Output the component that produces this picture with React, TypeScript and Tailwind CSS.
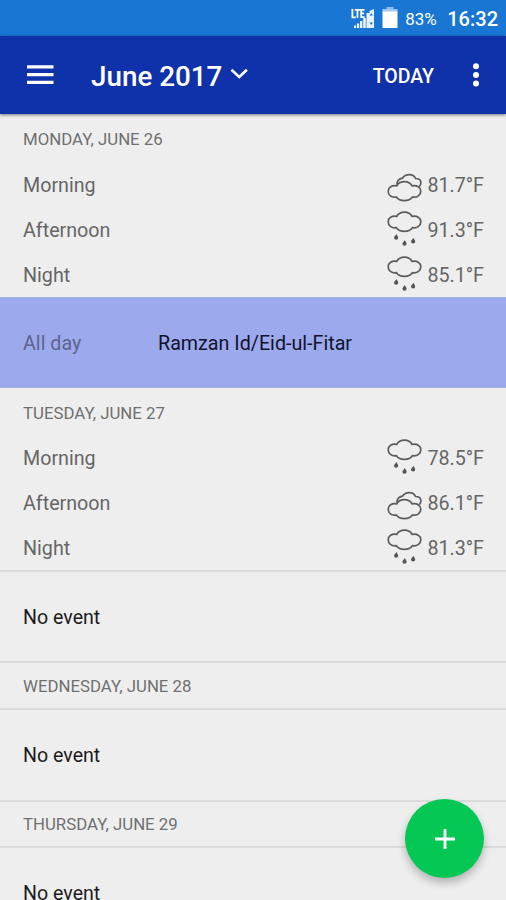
import React from 'react';

type Sky = 'cloudy' | 'rain';
type Period = { label: string; sky: Sky; temp: string };

const CLOUD =
  'M9.8 9.4C11.2 6.8 14 5.2 17.4 5.2S23.6 6.8 25 9.4C30 8.4 33.8 11 33.8 14.8S30.4 21.4 25.4 20.7C23.6 23.3 21 24.3 17.4 24.3S11.2 23.3 9.4 20.7C4.4 21.4 1.2 18.6 1.2 14.8S4.8 8.4 9.8 9.4Z';
const DROP = 'M0.4 -3C1 -1.4 2.2 -0.5 2.2 0.7A2.1 2.1 0 0 1 -2 0.7C-2 -0.5 -0.2 -1.4 0.4 -3Z';

function SkyIcon({ sky }: { sky: Sky }) {
  return (
    <svg className="h-[45px] w-[35px] shrink-0" viewBox="0 0 35 45" fill="none" stroke="#5c5c5c" strokeWidth="1.7">
      {sky === 'rain' ? (
        <>
          <path d={CLOUD} />
          <g fill="#555" stroke="none">
            <path d={DROP} transform="translate(9 30)" />
            <path d={DROP} transform="translate(17.4 36)" />
            <path d={DROP} transform="translate(26 33.8)" />
          </g>
        </>
      ) : (
        <>
          <path d={CLOUD} transform="translate(0 14.4)" />
          <path d="M9.8 22.5C10.2 18.7 12.2 16.8 15.4 16.2C17 13.8 19.3 12.6 22.3 12.6C25.5 12.6 27.5 14 28.6 16.5C32 16.5 33.9 18.2 33.9 20.8C33.9 22.3 33.4 23.6 32.2 24.7" />
        </>
      )}
    </svg>
  );
}

function DateHeader({ className, children }: { className: string; children: React.ReactNode }) {
  return (
    <div className={`flex shrink-0 items-center pl-[23px] text-[16.8px] text-[#707070] ${className}`}>
      <span>{children}</span>
    </div>
  );
}

function Forecast({ periods }: { periods: Period[] }) {
  return (
    <div className="flex shrink-0 flex-col text-[19.7px] text-[#666]">
      {periods.map((p) => (
        <div key={p.label} className="flex h-[45px] items-center pl-[23px] pr-[22px]">
          <span className="flex-1 pt-[2px]">{p.label}</span>
          <SkyIcon sky={p.sky} />
          <span className="w-[62px] pt-[2px] text-right">{p.temp}</span>
        </div>
      ))}
    </div>
  );
}

function NoEvent({ className }: { className: string }) {
  return (
    <div className={`flex shrink-0 items-center border-y-2 border-[#dbdbdb] pl-[23px] pt-[2px] text-[19.6px] text-[#1c1c1c] ${className}`}>
      <span>No event</span>
    </div>
  );
}

export default function App() {
  return (
    <div className="relative flex h-[900px] w-[506px] flex-col overflow-hidden bg-[#eee] font-[Roboto,sans-serif]">
      <div className="flex h-9 shrink-0 items-center bg-[#1976d2] pr-2 text-white">
        <svg className="ml-auto h-6 w-[25px]" viewBox="0 0 25 24">
          <g fill="none" stroke="#fff" strokeWidth="1.8">
            <path d="M1.4 3v8.4h3.4M3.8 3.8h5.4M6.5 3.8v8M13.5 3.8h-3.3v7.4h3.3M10.2 7.4h3" />
          </g>
          <path d="M3 19.5h2V22H3zM5.8 17.5h2.4V22H5.8zM9 15h2.4v7H9zM12.2 12h2.6v10h-2.6zM15.5 7h3v15h-3zM18.5 5l4.5-2v19h-4.5z" fill="#e9f3ff" />
          <path d="M20.2 7l1.7 2.5h-3.4zM20.2 19l1.7-2.5h-3.4z" fill="#1976d2" />
        </svg>
        <svg className="ml-1.5 h-6 w-4" viewBox="0 0 16 24">
          <path d="M4.5 1h7v2.4h-7z" fill="#8dbcf0" />
          <path d="M.5 3h15v3.5H.5z" fill="#9fc8f3" />
          <path d="M.5 5.5h15V22H.5z" fill="#fff" />
        </svg>
        <span className="ml-[7px] w-[42px] pt-[3px] text-[17px]">83%</span>
        <span className="pt-[2px] text-[20px] font-medium">16:32</span>
      </div>

      <header className="z-10 flex h-[78px] shrink-0 items-center bg-[#0f31aa] pl-[27px] pr-[24px] text-white shadow-[0_1px_3px_rgba(0,0,0,0.5)]">
        <svg className="h-5 w-[27px]" viewBox="0 0 27 20" fill="#fff">
          <path d="M0 .2h26.5v3.3H0zM0 8h26.5v3.3H0zM0 15.7h26.5V19H0z" />
        </svg>
        <h1 className="ml-[37px] w-[131px] whitespace-nowrap pt-[3px] text-[27.8px] font-medium leading-8">June 2017</h1>
        <svg className="ml-2 h-3 w-[18px] -translate-y-px" viewBox="0 0 18 12" fill="none" stroke="#fff" strokeWidth="2.6">
          <path d="M1.5 1.7L9.2 9l7.7-7.3" />
        </svg>
        <span className="ml-auto pt-[3px] text-[19.5px] font-medium">TODAY</span>
        <svg className="ml-[36px] h-6 w-3" viewBox="0 0 12 24" fill="#fff">
          <circle cx="6" cy="3.2" r="3" />
          <circle cx="6" cy="12" r="3" />
          <circle cx="6" cy="20.6" r="3" />
        </svg>
      </header>

      <DateHeader className="h-12 pt-1">MONDAY, JUNE 26</DateHeader>
      <Forecast
        periods={[
          { label: 'Morning', sky: 'cloudy', temp: '81.7°F' },
          { label: 'Afternoon', sky: 'rain', temp: '91.3°F' },
          { label: 'Night', sky: 'rain', temp: '85.1°F' },
        ]}
      />
      <div className="flex h-[91px] shrink-0 items-center border-y border-[#a9b2dc] bg-[#9da9ed] pl-[23px] pt-[3px] text-[19.7px]">
        <span className="w-[135px] text-[#5e648e]">All day</span>
        <span className="text-[#10132a]">Ramzan Id/Eid-ul-Fitar</span>
      </div>
      <DateHeader className="h-[47px] pt-1">TUESDAY, JUNE 27</DateHeader>
      <Forecast
        periods={[
          { label: 'Morning', sky: 'rain', temp: '78.5°F' },
          { label: 'Afternoon', sky: 'cloudy', temp: '86.1°F' },
          { label: 'Night', sky: 'rain', temp: '81.3°F' },
        ]}
      />
      <NoEvent className="h-[93px]" />
      <DateHeader className="h-[45px] pt-[3px]">WEDNESDAY, JUNE 28</DateHeader>
      <NoEvent className="h-[94px]" />
      <DateHeader className="h-11 pt-px">THURSDAY, JUNE 29</DateHeader>
      <NoEvent className="h-[94px]" />

      <button className="absolute left-[405px] top-[799px] z-20 flex h-[79px] w-[79px] items-center justify-center rounded-full bg-[#04c853] shadow-[0_5px_9px_rgba(0,0,0,0.25)]">
        <svg className="h-5 w-5" viewBox="0 0 20 20" stroke="#fff" strokeWidth="2.9" strokeLinecap="round">
          <path d="M10 1v18M1 10h18" />
        </svg>
      </button>
    </div>
  );
}
